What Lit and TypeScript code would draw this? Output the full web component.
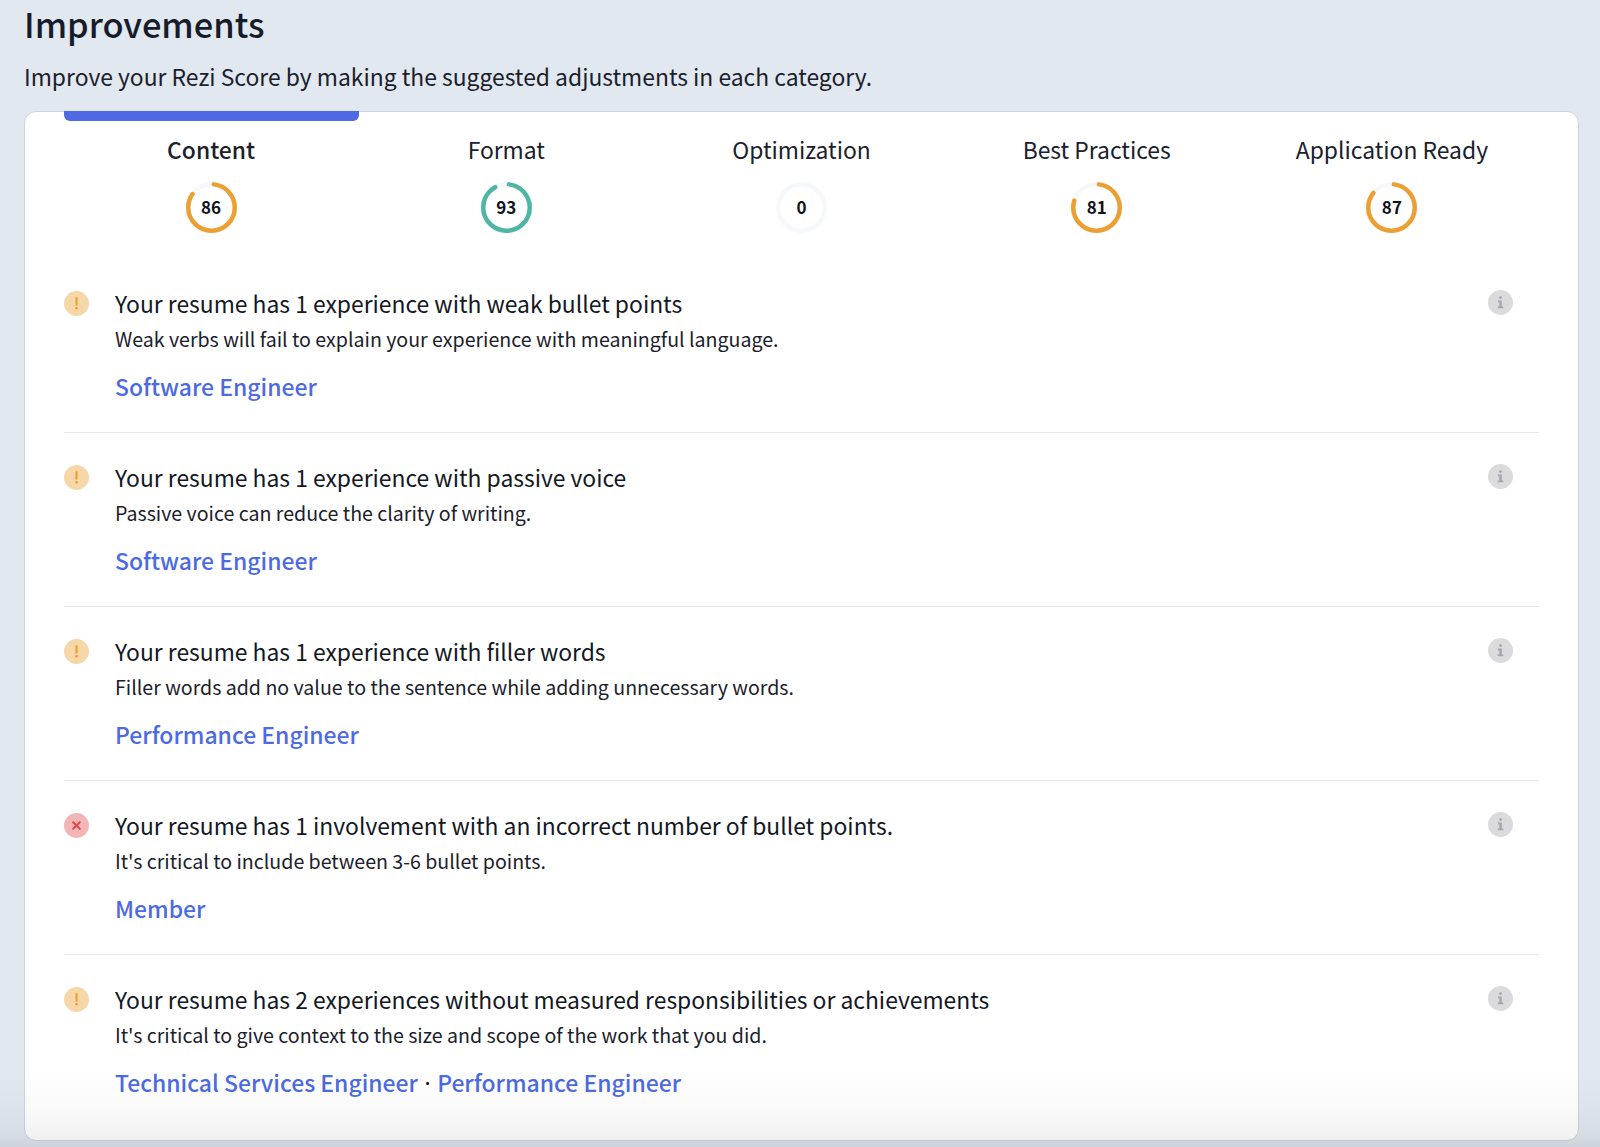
import { LitElement, html, css, svg } from "lit";
import { customElement } from "lit/decorators.js";

const tabs = [
  { name: "Content", score: 86, color: "#ec9f32", active: true },
  { name: "Format", score: 93, color: "#4fb6a5" },
  { name: "Optimization", score: 0, color: "#ec9f32" },
  { name: "Best Practices", score: 81, color: "#ec9f32" },
  { name: "Application Ready", score: 87, color: "#ec9f32" },
];

const rows = [
  { kind: "warn", title: "Your resume has 1 experience with weak bullet points", sub: "Weak verbs will fail to explain your experience with meaningful language.", links: ["Software Engineer"] },
  { kind: "warn", title: "Your resume has 1 experience with passive voice", sub: "Passive voice can reduce the clarity of writing.", links: ["Software Engineer"] },
  { kind: "warn", title: "Your resume has 1 experience with filler words", sub: "Filler words add no value to the sentence while adding unnecessary words.", links: ["Performance Engineer"] },
  { kind: "err", title: "Your resume has 1 involvement with an incorrect number of bullet points.", sub: "It's critical to include between 3-6 bullet points.", links: ["Member"] },
  { kind: "warn", title: "Your resume has 2 experiences without measured responsibilities or achievements", sub: "It's critical to give context to the size and scope of the work that you did.", links: ["Technical Services Engineer", "Performance Engineer"] },
];

function ring(score: number, color: string) {
  const r = 23.25;
  const c = 2 * Math.PI * r;
  const startOffset = 2.5;
  const len = Math.max(0, (score / 100) * c - 5);
  return html`<svg class="ring-svg" viewBox="0 0 51 51" width="51" height="51">
    <circle cx="25.5" cy="25.5" r="${r}" fill="none" stroke="#f7f8fb" stroke-width="4.5"></circle>
    ${score > 0
      ? svg`<circle cx="25.5" cy="25.5" r="${r}" fill="none" stroke="${color}" stroke-width="4.5" stroke-linecap="round"
          stroke-dasharray="${len} ${c}" stroke-dashoffset="${-startOffset}" transform="rotate(-90 25.5 25.5)"></circle>`
      : ""}
  </svg>`;
}

function statusIcon(kind: string) {
  if (kind === "err") {
    return html`<svg viewBox="0 0 25 25" width="25" height="25">
      <circle cx="12.5" cy="12.5" r="12.5" fill="#f3b6b6"></circle>
      <path d="M9.2 9.2l6.6 6.6M15.8 9.2l-6.6 6.6" stroke="#e0484f" stroke-width="2" stroke-linecap="round"></path>
    </svg>`;
  }
  return html`<svg viewBox="0 0 25 25" width="25" height="25">
    <circle cx="12.5" cy="12.5" r="12.5" fill="#f6d7a8"></circle>
    <path d="M12.5 7v6.8" stroke="#ee9c2b" stroke-width="2" stroke-linecap="round"></path>
    <circle cx="12.5" cy="17.2" r="1.3" fill="#ee9c2b"></circle>
  </svg>`;
}

const infoIcon = html`<svg viewBox="0 0 25 25" width="25" height="25">
  <circle cx="12.5" cy="12.5" r="12.5" fill="#dbdbdd"></circle>
  <circle cx="12.5" cy="7.6" r="1.4" fill="#a3a6ae"></circle>
  <path d="M10 10.6h3.8v6h1.5v1.7H9.7v-1.7h1.6v-4.3H10z" fill="#a3a6ae"></path>
</svg>`;

@customElement("app-root")
export class AppRoot extends LitElement {
  static styles = css`
    :host {
      display: block;
      position: relative;
      height: 1147px;
      overflow: hidden;
      background: #e2e8f0;
      color: #1a202c;
      font-family: "Noto Sans CJK SC", "Noto Sans", sans-serif;
    }
    .header { padding: 1px 25px 0 24px; }
    h1 {
      margin: 0;
      font-size: 34.4px;
      line-height: 44px;
      font-weight: 500;
      color: #171c2b;
    }
    .lead {
      margin: 15px 0 19px;
      font-size: 22.86px;
      line-height: 32px;
      font-weight: 400;
    }
    .card {
      margin: 0 21px 0 24px;
      height: 1030px;
      box-sizing: border-box;
      background: #fff;
      border: 1.5px solid #cbd5e0;
      border-radius: 12px;
      padding: 0 38.5px;
    }
    .tabs { display: grid; grid-template-columns: repeat(5, 1fr); }
    .tab {
      display: flex;
      flex-direction: column;
      align-items: center;
      border-top: 9px solid transparent;
      padding-top: 13.5px;
      margin-top: -1.5px;
    }
    .tab.active { position: relative; }
    .indicator {
      position: absolute;
      top: 0;
      left: 0;
      right: 0;
      transform: translateY(-9px);
      height: 10px;
      background: #4f69e2;
      border-radius: 0 0 6px 6px;
    }
    .label { font-size: 22.86px; line-height: 32px; }
    .tab.active .label { font-weight: 500; }
    .ring { position: relative; width: 51px; height: 51px; margin-top: 16.5px; display: flex; align-items: center; justify-content: center; }
    .ring-svg { position: absolute; inset: 0; }
    .score { position: relative; font-size: 17px; line-height: 20px; font-weight: 700; color: #10131c; }
    .row {
      display: grid;
      grid-template-columns: 25px 1fr 25px;
      column-gap: 26.5px;
      padding: 28px 25.5px 30px 0;
      border-bottom: 1px solid #e2e8f0;
    }
    .row:last-child { border-bottom: 0; }
    .list { margin: 26px 1px 0 0; }
    .icon { margin-top: 4px; height: 25px; }
    .info { margin-top: 3.5px; height: 25px; }
    .title { font-size: 22.86px; line-height: 32px; color: #141824; }
    .sub { font-size: 19.58px; line-height: 28px; margin-top: 6px; }
    .links { margin-top: 17px; font-size: 22.95px; line-height: 32px; font-weight: 500; color: #4c6ae3; }
    .dot { color: #10131c; margin: 0 6.5px; font-weight: 400; font-family: "Noto Sans", sans-serif; }
    .fade {
      position: absolute;
      left: 0;
      right: 0;
      bottom: 0;
      height: 80px;
      pointer-events: none;
      background: linear-gradient(rgba(0, 0, 0, 0), rgba(0, 0, 0, 0.02) 50%, rgba(0, 0, 0, 0.05) 85%, rgba(0, 0, 0, 0.09));
    }
  `;

  render() {
    return html`
      <div class="header">
        <h1>Improvements</h1>
        <p class="lead">Improve your Rezi Score by making the suggested adjustments in each category.</p>
      </div>
      <div class="card">
        <div class="tabs">
          ${tabs.map(
            (t) => html`<div class="tab ${t.active ? "active" : ""}">
              ${t.active ? html`<div class="indicator"></div>` : ""}
              <div class="label">${t.name}</div>
              <div class="ring">${ring(t.score, t.color)}<span class="score">${t.score}</span></div>
            </div>`
          )}
        </div>
        <div class="list">
          ${rows.map(
            (r) => html`<div class="row">
              <div class="icon">${statusIcon(r.kind)}</div>
              <div>
                <div class="title">${r.title}</div>
                <div class="sub">${r.sub}</div>
                <div class="links">
                  ${r.links.map((l, i) => html`${i > 0 ? html`<span class="dot">·</span>` : ""}<span>${l}</span>`)}
                </div>
              </div>
              <div class="info">${infoIcon}</div>
            </div>`
          )}
        </div>
      </div>
      <div class="fade"></div>
    `;
  }
}
